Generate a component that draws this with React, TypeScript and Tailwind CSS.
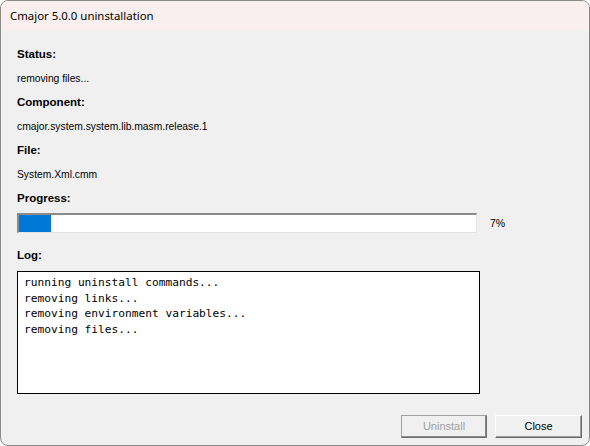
import React from "react";

const sans = { fontFamily: '"Liberation Sans", Arial, sans-serif' };
const bold = { fontFamily: '"Liberation Sans", Arial, sans-serif' };

export default function App() {
  const progress = 7;
  return (
    <div className="w-[590px] h-[446px] bg-white">
      <div className="w-[590px] h-[446px] rounded-[8px] border border-[#8a8a8a] overflow-hidden flex flex-col bg-[#f0f0f0]">
        <div
          className="h-[30px] shrink-0 bg-[#f9efee] flex items-center pl-[9px] text-[11.4px] text-black"
          style={{ fontFamily: '"Noto Sans", "Open Sans", sans-serif' }}
        >
          Cmajor 5.0.0 uninstallation
        </div>
        <div className="flex-1 flex flex-col pl-[16px] pt-[12px] text-[10.3px] text-black" style={sans}>
          <div className="h-[24px] flex items-center font-bold text-[11.5px]" style={bold}>Status:</div>
          <div className="h-[24px] flex items-center">removing files...</div>
          <div className="h-[24px] flex items-center font-bold text-[11.5px]" style={bold}>Component:</div>
          <div className="h-[24px] flex items-center">cmajor.system.system.lib.masm.release.1</div>
          <div className="h-[24px] flex items-center font-bold text-[11.5px]" style={bold}>File:</div>
          <div className="h-[24px] flex items-center">System.Xml.cmm</div>
          <div className="h-[24px] flex items-center font-bold text-[11.5px]" style={bold}>Progress:</div>
          <div className="mt-[2px] flex items-center">
            <div className="w-[460px] h-[20px] bg-white border-t-2 border-l-2 border-b border-r border-t-[#8a8a8a] border-l-[#8a8a8a] border-b-[#e3e3e3] border-r-[#e3e3e3]">
              <div className="h-full bg-[#0078d7]" style={{ width: `${progress}%` }} />
            </div>
            <div className="ml-[13px] mt-[2px] text-[10.5px]">7%</div>
          </div>
          <div className="h-[24px] mt-[11px] flex items-center font-bold text-[11.5px]" style={bold}>Log:</div>
          <div
            className="mt-[3px] w-[463px] h-[123px] bg-white border border-black pl-[6px] pt-[3px] text-[11.2px] leading-[15.5px]"
            style={{ fontFamily: '"DejaVu Sans Mono", "Liberation Mono", monospace' }}
          >
            <div>running uninstall commands...</div>
            <div>removing links...</div>
            <div>removing environment variables...</div>
            <div>removing files...</div>
          </div>
          <div className="flex justify-end gap-[8px] pr-[7px] mt-[21px]">
            <button className="w-[86px] h-[23px] bg-[#f0f0f0] border border-t-[#a0a0a0] border-l-[#a0a0a0] border-r-[#6d6d6d] border-b-[#6d6d6d] shadow-[inset_-1px_-1px_0_#8a8a8a] text-[11px] text-[#a0a0a0]">
              Uninstall
            </button>
            <button className="w-[87px] h-[23px] bg-[#f0f0f0] border border-t-white border-l-white border-r-[#696969] border-b-[#696969] shadow-[inset_-1px_-1px_0_#a0a0a0] text-[11px] text-black">
              Close
            </button>
          </div>
        </div>
      </div>
    </div>
  );
}
